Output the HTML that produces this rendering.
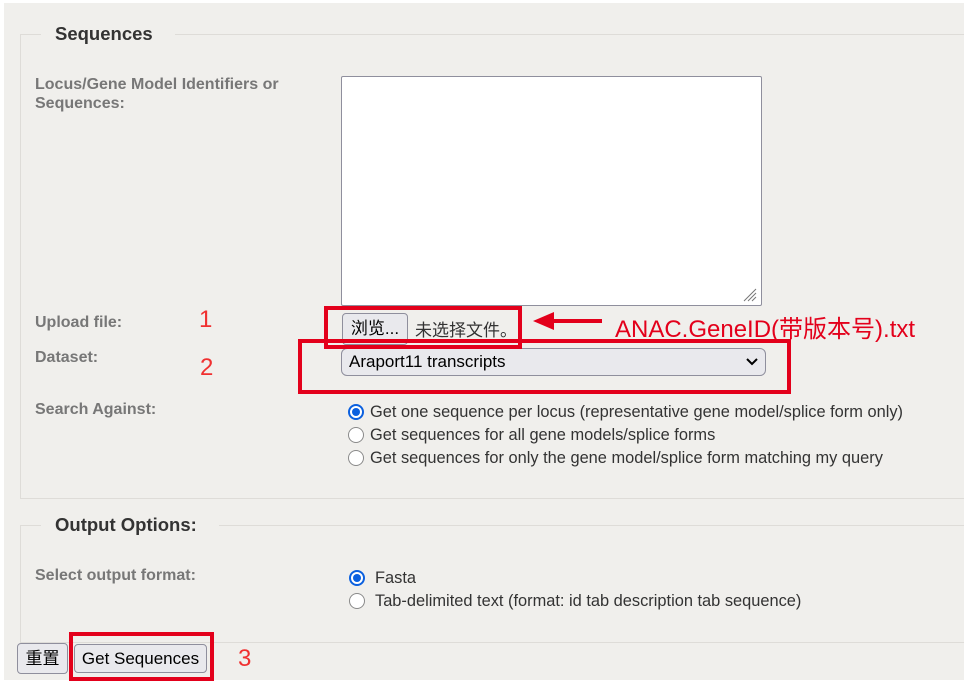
<!DOCTYPE html>
<html><head><meta charset="utf-8">
<style>
body{margin:0;width:964px;height:689px;background:#fff;position:relative;overflow:hidden;font-family:"Liberation Sans","Noto Sans CJK SC",sans-serif;}
.bg{position:absolute;left:4px;top:3px;width:960px;height:677px;background:#f0efec;}
.a{position:absolute;white-space:nowrap;}
.lbl{position:absolute;color:#777;font-weight:bold;font-size:16px;line-height:19px;}
.leg{position:absolute;color:#333;font-weight:bold;font-size:18.5px;background:#f0efec;padding:0 22px 0 14px;}
.line{position:absolute;background:#dedcd8;}
.opt{position:absolute;font-size:16.4px;color:#333;white-space:nowrap;}
.r{position:absolute;width:16px;height:16px;box-sizing:border-box;border:1.5px solid #8a8a8a;border-radius:50%;background:#fff;}
.rc{position:absolute;width:16px;height:16px;box-sizing:border-box;border:2px solid #0b60df;border-radius:50%;background:#fff;}
.rc::after{content:"";position:absolute;left:2px;top:2px;width:8px;height:8px;border-radius:50%;background:#0b60df;}
.red{position:absolute;border:4px solid #e3001b;box-sizing:border-box;}
.num{position:absolute;color:#f03030;font-size:24px;}
.btn{position:absolute;background:#e9e9ed;border:1px solid #8f8f9d;border-radius:4px;box-sizing:border-box;font-size:17px;color:#000;text-align:center;}
</style></head><body>
<div class="bg"></div>
<div class="line" style="left:20px;top:34px;width:944px;height:1px"></div>
<div class="line" style="left:20px;top:34px;width:1px;height:464px"></div>
<div class="line" style="left:20px;top:498px;width:944px;height:1px"></div>
<div class="leg" style="left:41px;top:23px">Sequences</div>
<div class="lbl" style="left:35px;top:75px">Locus/Gene Model Identifiers or<br>Sequences:</div>
<div class="a" style="left:341px;top:76px;width:419px;height:228px;background:#fff;border:1px solid #8f8f9d;border-radius:2px"></div>
<svg class="a" style="left:740px;top:285px" width="18" height="18"><path d="M4 16L16 4M8 16L16 8M12 16L16 12" stroke="#777" stroke-width="1"/></svg>
<div class="lbl" style="left:35px;top:313px">Upload file:</div>
<div class="lbl" style="left:35px;top:348px">Dataset:</div>
<div class="lbl" style="left:35px;top:400px">Search Against:</div>
<div class="btn" style="left:342px;top:313px;width:66px;height:32px;line-height:30px">浏览...</div>
<div class="a" style="left:415px;top:316px;font-size:17px;color:#333">未选择文件。</div>
<div class="btn" style="left:341px;top:348px;width:425px;height:28px;text-align:left;padding-left:7px;line-height:26px;border-radius:6px">Araport11 transcripts</div>
<svg class="a" style="left:745px;top:356px" width="14" height="12"><path d="M2 3L7 8L12 3" stroke="#000" stroke-width="2" fill="none"/></svg>
<div class="red" style="left:324px;top:306px;width:198px;height:43px"></div>
<div class="red" style="left:298px;top:339px;width:493px;height:55px"></div>
<svg class="a" style="left:530px;top:309px" width="75" height="24"><path d="M18 12H72" stroke="#e3001b" stroke-width="4"/><path d="M3 12L24 3V21Z" fill="#e3001b"/></svg>
<div class="a" style="left:615px;top:309px;color:#e3001b;font-size:24px">ANAC.GeneID(带版本号).txt</div>
<div class="num" style="left:199px;top:306px">1</div>
<div class="num" style="left:200px;top:354px">2</div>
<div class="rc" style="left:348px;top:404px"></div>
<div class="opt" style="left:370px;top:403px">Get one sequence per locus (representative gene model/splice form only)</div>
<div class="r" style="left:348px;top:427px"></div>
<div class="opt" style="left:370px;top:426px">Get sequences for all gene models/splice forms</div>
<div class="r" style="left:348px;top:450px"></div>
<div class="opt" style="left:370px;top:449px">Get sequences for only the gene model/splice form matching my query</div>
<div class="line" style="left:20px;top:525px;width:944px;height:1px"></div>
<div class="line" style="left:20px;top:525px;width:1px;height:117px"></div>
<div class="line" style="left:20px;top:642px;width:944px;height:1px"></div>
<div class="leg" style="left:41px;top:514px">Output Options:</div>
<div class="lbl" style="left:35px;top:566px">Select output format:</div>
<div class="rc" style="left:349px;top:570px"></div>
<div class="opt" style="left:375px;top:569px">Fasta</div>
<div class="r" style="left:349px;top:593px"></div>
<div class="opt" style="left:375px;top:592px">Tab-delimited text (format: id tab description tab sequence)</div>
<div class="btn" style="left:17px;top:643px;width:51px;height:31px;line-height:29px">重置</div>
<div class="btn" style="left:74px;top:644px;width:133px;height:29px;line-height:27px">Get Sequences</div>
<div class="red" style="left:69px;top:632px;width:145px;height:49px"></div>
<div class="num" style="left:238px;top:645px">3</div>
</body></html>
